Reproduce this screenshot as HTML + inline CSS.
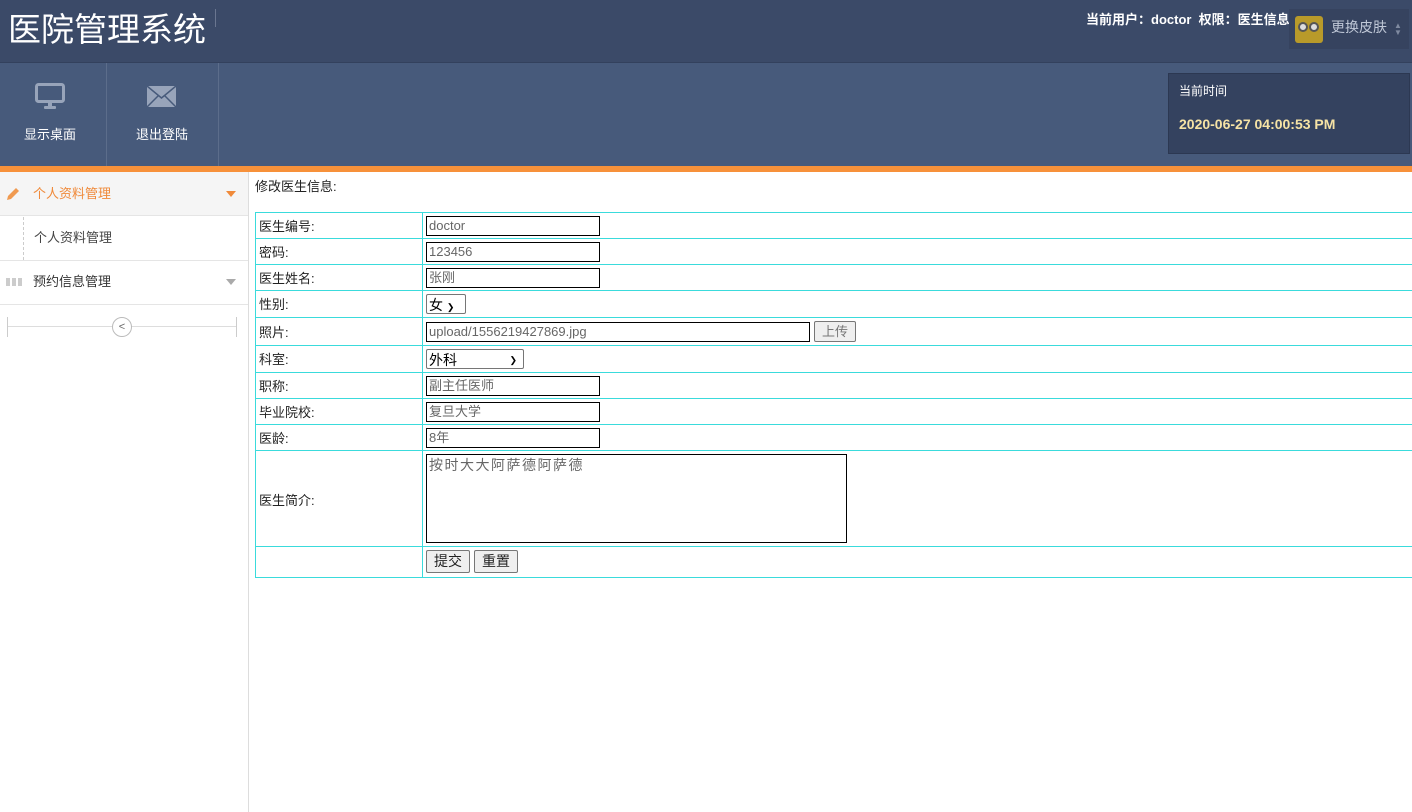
<!DOCTYPE html><html><head><meta charset="utf-8"><style>
*{margin:0;padding:0;box-sizing:border-box}
body{width:1412px;height:812px;position:relative;overflow:hidden;background:#fff;font-family:"Liberation Sans","Noto Sans CJK SC",sans-serif;font-size:13px;color:#222}
.a{position:absolute;line-height:1.35}
.inp{position:absolute;border:1px solid #000;height:20px;background:#fff;color:#666;font-size:13px;padding-left:2px;line-height:18px}
.hl{position:absolute;left:255px;width:1157px;height:1px;background:#3adbdc}
.lb{position:absolute;left:259px;font-size:13px;line-height:16px}
.btn{position:absolute;border:1px solid #777;border-radius:2px;background:#efefef;height:23px;line-height:21px;font-size:14px;text-align:center}
</style></head><body>
<div class="a" style="left:0;top:0;width:1412px;height:63px;background:#3b4a68;border-bottom:1px solid #33415d"></div>
<div class="a" style="left:8px;top:8px;font-size:33px;color:#fff;line-height:44px">医院管理系统</div>
<div class="a" style="left:215px;top:9px;width:1px;height:18px;background:#6a7690"></div>
<div class="a" style="left:1086px;top:11px;color:#fff;font-size:13px;font-weight:bold">当前用户：doctor &nbsp;权限：医生信息</div>
<div class="a" style="left:1289px;top:9px;width:120px;height:40px;background:#36435f"></div>
<div class="a" style="left:1295px;top:16px;width:28px;height:27px;background:#b89a2a;border-radius:3px"></div>
<div class="a" style="left:1298px;top:22px;width:10px;height:10px;border-radius:50%;background:#ddd;border:2px solid #555"></div>
<div class="a" style="left:1309px;top:22px;width:10px;height:10px;border-radius:50%;background:#ddd;border:2px solid #555"></div>
<div class="a" style="left:1331px;top:18px;color:#bfc7d6;font-size:14px">更换皮肤</div>
<div class="a" style="left:1394px;top:22px;color:#7f8aa0;font-size:8px;line-height:7px">▲<br>▼</div>
<div class="a" style="left:0;top:63px;width:1412px;height:103px;background:#475a7b"></div>
<div class="a" style="left:106px;top:63px;width:1px;height:103px;background:#5c6d8b"></div>
<div class="a" style="left:218px;top:63px;width:1px;height:103px;background:#5c6d8b"></div>
<svg class="a" style="left:35px;top:83px" width="30" height="28" viewBox="0 0 30 28"><rect x="1.5" y="1.5" width="27" height="17" rx="2" fill="none" stroke="#98a4ba" stroke-width="3"/><rect x="13" y="19" width="4" height="4" fill="#98a4ba"/><rect x="9" y="23" width="12" height="3" rx="1" fill="#98a4ba"/></svg>
<svg class="a" style="left:147px;top:86px" width="29" height="21" viewBox="0 0 29 21"><rect width="29" height="21" fill="#98a4ba"/><path d="M0 0L14.5 12L29 0M0 21L11 10M29 21L18 10" stroke="#475a7b" stroke-width="1.5" fill="none"/></svg>
<div class="a" style="left:24px;top:126px;color:#fff;font-size:13px">显示桌面</div>
<div class="a" style="left:136px;top:126px;color:#fff;font-size:13px">退出登陆</div>
<div class="a" style="left:1168px;top:73px;width:242px;height:81px;background:#34425f;border:1px solid #2c3852"></div>
<div class="a" style="left:1179px;top:83px;color:#fff;font-size:12px">当前时间</div>
<div class="a" style="left:1179px;top:115px;color:#f6e3a5;font-size:14px;font-weight:bold">2020-06-27 04:00:53 PM</div>
<div class="a" style="left:0;top:166px;width:1412px;height:6px;background:#f7913a"></div>
<div class="a" style="left:248px;top:172px;width:1px;height:640px;background:#ddd"></div>
<div class="a" style="left:0;top:172px;width:248px;height:44px;background:#f5f5f5;border-bottom:1px solid #e5e5e5"></div>
<svg class="a" style="left:5px;top:186px" width="16" height="16" viewBox="0 0 16 16"><path d="M2 14l1-4 8-8 3 3-8 8z" fill="#f09a50"/></svg>
<div class="a" style="left:33px;top:185px;color:#f08a3a;font-size:13px">个人资料管理</div>
<div class="a" style="left:226px;top:191px;border:5px solid transparent;border-top:6px solid #f08a3a"></div>
<div class="a" style="left:23px;top:217px;width:0;height:43px;border-left:1px dashed #ccc"></div>
<div class="a" style="left:34px;top:229px;color:#444;font-size:13px">个人资料管理</div>
<div class="a" style="left:0;top:260px;width:248px;height:1px;background:#e5e5e5"></div>
<div class="a" style="left:6px;top:278px;width:16px;height:8px;background:repeating-linear-gradient(90deg,#ccc 0 4px,transparent 4px 6px)"></div>
<div class="a" style="left:33px;top:273px;color:#333;font-size:13px">预约信息管理</div>
<div class="a" style="left:226px;top:279px;border:5px solid transparent;border-top:6px solid #aaa"></div>
<div class="a" style="left:0;top:304px;width:248px;height:1px;background:#e5e5e5"></div>
<div class="a" style="left:7px;top:326px;width:230px;height:1px;background:#ddd"></div>
<div class="a" style="left:7px;top:317px;width:1px;height:20px;background:#ccc"></div>
<div class="a" style="left:236px;top:317px;width:1px;height:20px;background:#ccc"></div>
<div class="a" style="left:112px;top:317px;width:20px;height:20px;border-radius:50%;border:1px solid #bbb;background:#fff;text-align:center;font-size:11px;line-height:18px;color:#666">&lt;</div>
<div class="a" style="left:255px;top:178px;font-size:13px">修改医生信息:</div>
<div class="hl" style="top:212px"></div><div class="hl" style="top:238px"></div><div class="hl" style="top:264px"></div><div class="hl" style="top:290px"></div><div class="hl" style="top:317px"></div><div class="hl" style="top:345px"></div><div class="hl" style="top:372px"></div><div class="hl" style="top:398px"></div><div class="hl" style="top:424px"></div><div class="hl" style="top:450px"></div><div class="hl" style="top:546px"></div><div class="hl" style="top:577px"></div>
<div class="a" style="left:255px;top:212px;width:1px;height:366px;background:#3adbdc"></div>
<div class="a" style="left:422px;top:212px;width:1px;height:366px;background:#3adbdc"></div>
<div class="lb" style="top:219px">医生编号:</div><div class="lb" style="top:245px">密码:</div><div class="lb" style="top:271px">医生姓名:</div><div class="lb" style="top:297px">性别:</div><div class="lb" style="top:325px">照片:</div><div class="lb" style="top:352px">科室:</div><div class="lb" style="top:379px">职称:</div><div class="lb" style="top:405px">毕业院校:</div><div class="lb" style="top:431px">医龄:</div><div class="lb" style="top:493px">医生简介:</div>
<div class="inp" style="left:426px;top:216px;width:174px">doctor</div>
<div class="inp" style="left:426px;top:242px;width:174px">123456</div>
<div class="inp" style="left:426px;top:268px;width:174px">张刚</div>
<div class="inp" style="left:426px;top:294px;width:40px;border-color:#767676;border-radius:2px;color:#000;font-size:14px;padding-top:1px">女 <span style="font-size:9px">&#10095;</span></div>
<div class="inp" style="left:426px;top:322px;width:384px">upload/1556219427869.jpg</div>
<div class="btn" style="left:814px;top:321px;width:42px;height:21px;line-height:19px;color:#777;font-size:13px">上传</div>
<div class="inp" style="left:426px;top:349px;width:98px;border-color:#767676;border-radius:2px;color:#000;font-size:14px;padding-top:1px">外科 <span style="position:absolute;right:6px;font-size:9px">&#10095;</span></div>
<div class="inp" style="left:426px;top:376px;width:174px">副主任医师</div>
<div class="inp" style="left:426px;top:402px;width:174px">复旦大学</div>
<div class="inp" style="left:426px;top:428px;width:174px">8年</div>
<div class="inp" style="left:426px;top:454px;width:421px;height:89px;letter-spacing:1.5px;font-size:14px;padding-top:1px">按时大大阿萨德阿萨德</div>
<div class="btn" style="left:426px;top:550px;width:44px">提交</div>
<div class="btn" style="left:474px;top:550px;width:44px">重置</div>
</body></html>
